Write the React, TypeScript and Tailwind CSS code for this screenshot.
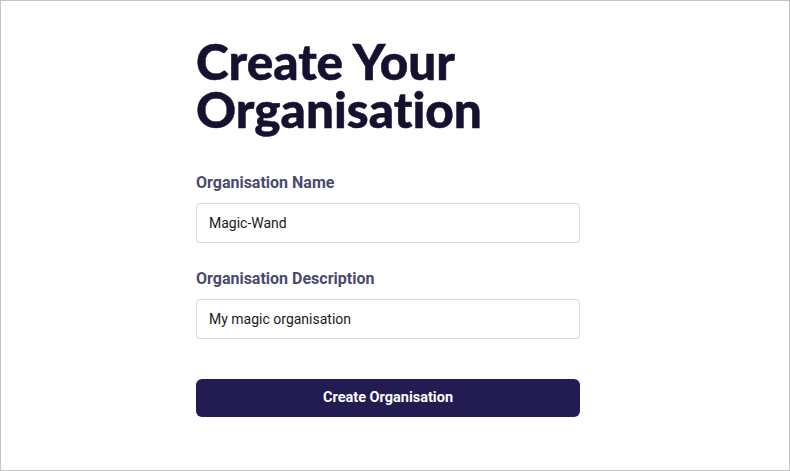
import { useState } from 'react';

export default function App() {
  const [name, setName] = useState('Magic-Wand');
  const [description, setDescription] = useState('My magic organisation');

  return (
    <div className="h-[471px] w-[790px] border border-[#c4c4c4] bg-white overflow-hidden">
      <div className="ml-[195px] w-[384px] pt-[36px]">
        {/* heading is Lato Black in the design; bold + a thin stroke stands in for it */}
        <h1
          className="text-[49.5px] leading-[48px] font-black text-[#14122e] [-webkit-text-stroke:0.5px_#14122e]"
          style={{ fontFamily: 'Lato, sans-serif', fontVariantLigatures: 'none' }}
        >
          Create Your Organisation
        </h1>

        <form
          className="mt-[40px] flex flex-col"
          style={{ fontFamily: 'Roboto, sans-serif' }}
          onSubmit={(e) => e.preventDefault()}
        >
          <label className="text-[16px] font-bold text-[#4b4a6e] leading-[20px]">Organisation Name</label>
          <input
            value={name}
            onChange={(e) => setName(e.target.value)}
            className="mt-[10px] h-[40px] w-full rounded-[4px] border border-[#d4d4dc] px-[12px] text-[14px] text-[#1a1a1a] outline-none"
          />

          <label className="mt-[26px] text-[16px] font-bold text-[#4b4a6e] leading-[20px]">Organisation Description</label>
          <input
            value={description}
            onChange={(e) => setDescription(e.target.value)}
            className="mt-[10px] h-[40px] w-full rounded-[4px] border border-[#d4d4dc] px-[12px] text-[14px] text-[#1a1a1a] outline-none"
          />

          <button
            type="submit"
            className="mt-[40px] h-[38px] w-full rounded-[6px] bg-[#231c52] text-[14.5px] font-bold text-white"
          >
            Create Organisation
          </button>
        </form>
      </div>
    </div>
  );
}
